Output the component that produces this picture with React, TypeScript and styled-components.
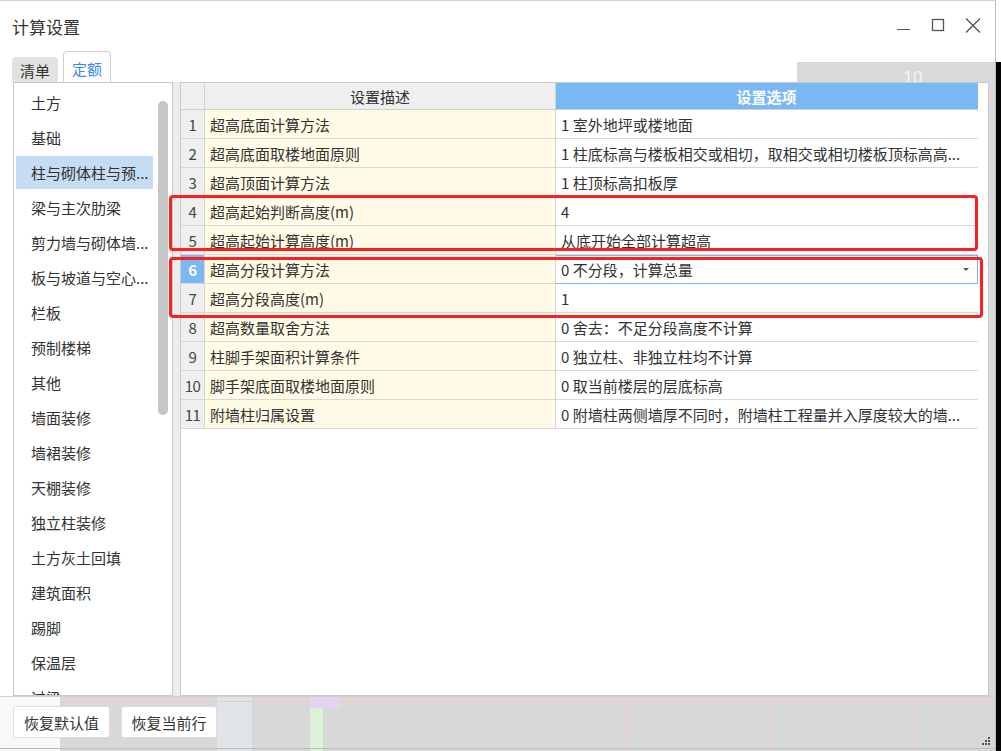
import React from "react";
import styled, { createGlobalStyle } from "styled-components";

const GlobalStyle = createGlobalStyle`
  html, body {
    margin: 0;
    padding: 0;
    background: #ffffff;
    overflow: hidden;
  }
  * {
    box-sizing: border-box;
  }
  body {
    font-family: "Noto Sans CJK SC", "Noto Sans", sans-serif;
    color: #333333;
  }
`;

const Screen = styled.div`
  display: flex;
  width: 1001px;
  height: 751px;
`;

const Window = styled.div`
  width: 996px;
  height: 751px;
  display: flex;
  flex-direction: column;
  border-top: 1px solid #d4d4d4;
  border-right: 1px solid #bdbdbd;
  background: #ffffff;
`;

const OuterEdge = styled.div`
  flex: 1;
  background: linear-gradient(to bottom, #ffffff 62px, #050505 62px);
`;

const TitleBar = styled.div`
  height: 50px;
  display: flex;
  align-items: center;
  justify-content: space-between;
  padding: 0 12px;
`;

const Title = styled.div`
  font-size: 17px;
  line-height: 20px;
  color: #333333;
  padding-top: 2px;
`;

const Controls = styled.div`
  display: flex;
  gap: 15px;
  color: #555555;
`;

const ControlButton = styled.div`
  width: 20px;
  height: 20px;
  display: flex;
`;

const TabRow = styled.div`
  position: relative;
  height: 31px;
  display: flex;
  align-items: flex-end;
  gap: 5px;
  padding-left: 12px;
  background: linear-gradient(#d9d9d9, #d9d9d9) 797px 11px / 200px 20px no-repeat,
    #ffffff;
`;

const Tab = styled.div<{ $active?: boolean }>`
  height: ${({ $active }) => ($active ? "31px" : "25px")};
  padding: 0 ${({ $active }) => ($active ? "8px" : "7px")};
  display: flex;
  align-items: center;
  font-size: 15px;
  line-height: 18px;
  color: ${({ $active }) => ($active ? "#3b8be8" : "#333333")};
  background: ${({ $active }) => ($active ? "#ffffff" : "#e2e2e2")};
  border: 1px solid ${({ $active }) => ($active ? "#cfcfcf" : "#e2e2e2")};
  border-bottom: none;
  border-radius: 4px 4px 0 0;
  padding-top: ${({ $active }) => ($active ? "4px" : "2px")};
`;

const GhostLabel = styled.div`
  position: absolute;
  left: 899px;
  top: 13px;
  width: 28px;
  height: 28px;
  border-radius: 50%;
  border: 1px solid #cfe6cf;
  color: #f4f4f4;
  font-family: "Liberation Sans", sans-serif;
  font-size: 17px;
  line-height: 26px;
  text-align: center;
`;

const Body = styled.div`
  position: relative;
  height: 614px;
  display: flex;
  padding-left: 13px;
  background: linear-gradient(to right, #ffffff 976px, #d9d9d9 976px);
`;

const ListPanel = styled.div`
  width: 160px;
  border: 1px solid #c9c9c9;
  background: #ffffff;
  display: flex;
  overflow: hidden;
`;

const ItemList = styled.div`
  width: 144px;
  padding: 3px 0 0 2px;
  display: flex;
  flex-direction: column;
  gap: 2px;
`;

const ListItem = styled.div<{ $selected?: boolean }>`
  width: 137px;
  height: 33px;
  flex: none;
  padding-left: 15px;
  display: flex;
  align-items: center;
  font-size: 15px;
  white-space: nowrap;
  color: #333333;
  background: ${({ $selected }) => ($selected ? "#c6dcf2" : "transparent")};
`;

const ScrollTrack = styled.div`
  width: 10px;
  margin-left: 0;
  padding-top: 18px;
`;

const ScrollThumb = styled.div`
  width: 10px;
  height: 314px;
  border-radius: 5px;
  background: #c6c6c6;
`;

const Splitter = styled.div`
  width: 7px;
  background: #ececec;
`;

const TablePanel = styled.div`
  width: 809px;
  border: 1px solid #c9c9c9;
  background: #ffffff;
  display: flex;
  flex-direction: column;
`;

const Row = styled.div`
  display: grid;
  grid-template-columns: 24px 351px 422px;
  height: 29px;
  width: 797px;
  border-bottom: 1px solid #d8d8d8;
`;

const HeaderRow = styled(Row)`
  height: 27px;
  border-bottom-color: #d0d0d0;
`;

const HeadCell = styled.div<{ $accent?: boolean }>`
  display: flex;
  align-items: center;
  justify-content: center;
  font-size: 15px;
  font-weight: ${({ $accent }) => ($accent ? 700 : 400)};
  color: ${({ $accent }) => ($accent ? "#ffffff" : "#333333")};
  background: ${({ $accent }) => ($accent ? "#7ab8f5" : "#efefef")};
  border-right: 1px solid ${({ $accent }) => ($accent ? "#7ab8f5" : "#d5d5d5")};
`;

const IndexCell = styled.div<{ $active?: boolean }>`
  display: flex;
  align-items: center;
  justify-content: center;
  font-size: 15px;
  font-weight: ${({ $active }) => ($active ? 700 : 400)};
  color: ${({ $active }) => ($active ? "#ffffff" : "#444444")};
  background: ${({ $active }) => ($active ? "#7ab8f5" : "#efefef")};
  border-right: 1px solid #d5d5d5;
  letter-spacing: -0.5px;
`;

const DescCell = styled.div`
  display: flex;
  align-items: center;
  padding-left: 5px;
  font-size: 15px;
  white-space: nowrap;
  color: #333333;
  background: #fffbe6;
  border-right: 1px solid #d5d5d5;
`;

const ValueCell = styled.div<{ $focused?: boolean }>`
  position: relative;
  display: flex;
  align-items: center;
  padding-left: 5px;
  font-size: 15px;
  white-space: nowrap;
  overflow: hidden;
  color: #333333;
  background: #ffffff;
  border: 1px solid ${({ $focused }) => ($focused ? "#7ab8f5" : "transparent")};
  border-left: none;
  margin-bottom: ${({ $focused }) => ($focused ? "-1px" : "0")};
`;

const DropArrow = styled.div`
  position: absolute;
  right: 8px;
  top: 12px;
  width: 0;
  height: 0;
  border-left: 3px solid transparent;
  border-right: 3px solid transparent;
  border-top: 3px solid #555555;
`;

const Highlight = styled.div<{ $left: number; $top: number; $width: number; $height: number }>`
  position: absolute;
  left: ${({ $left }) => $left}px;
  top: ${({ $top }) => $top}px;
  width: ${({ $width }) => $width}px;
  height: ${({ $height }) => $height}px;
  border: 3px solid #ff1e1e;
  border-radius: 4px;
  pointer-events: none;
`;

const Footer = styled.div`
  position: relative;
  height: 55px;
  display: flex;
  align-items: flex-start;
  gap: 11px;
  padding: 9px 0 0 13px;
  border-top: 1px solid #d0d0d0;
  background:
    linear-gradient(#bcbcbc, #bcbcbc) 0 51px / 100% 1px no-repeat,
    linear-gradient(#e6d3f2, #e6d3f2) 310px 0 / 30px 11px no-repeat,
    linear-gradient(#dcf2d8, #dcf2d8) 310px 11px / 13px 44px no-repeat,
    linear-gradient(#f2c9c9, #f2c9c9) 60px 4px / 936px 1px no-repeat,
    linear-gradient(#f2cccc, #f2cccc) 195px 0 / 1px 100% no-repeat,
    linear-gradient(#f2cccc, #f2cccc) 626px 0 / 1px 100% no-repeat,
    linear-gradient(#f2cccc, #f2cccc) 769px 0 / 1px 100% no-repeat,
    linear-gradient(#f2cccc, #f2cccc) 913px 0 / 1px 100% no-repeat,
    linear-gradient(#e0e3e7, #e0e3e7) 217px 0 / 35px 100% no-repeat,
    linear-gradient(to right, #f8f8f8 60px, #d8d8d8 60px);
`;

const FooterButton = styled.button<{ $width: number }>`
  width: ${({ $width }) => $width}px;
  height: 32px;
  border: 1px solid #dedede;
  border-radius: 3px;
  background: #ffffff;
  font-family: "Noto Sans CJK SC", "Noto Sans", sans-serif;
  font-size: 15px;
  color: #333333;
  padding: 0;
`;

const Grip = styled.svg`
  position: absolute;
  right: 5px;
  bottom: 5px;
`;

const categories = [
  "土方",
  "基础",
  "柱与砌体柱与预...",
  "梁与主次肋梁",
  "剪力墙与砌体墙...",
  "板与坡道与空心...",
  "栏板",
  "预制楼梯",
  "其他",
  "墙面装修",
  "墙裙装修",
  "天棚装修",
  "独立柱装修",
  "土方灰土回填",
  "建筑面积",
  "踢脚",
  "保温层",
  "过梁",
];

const settings = [
  ["超高底面计算方法", "1 室外地坪或楼地面"],
  ["超高底面取楼地面原则", "1 柱底标高与楼板相交或相切，取相交或相切楼板顶标高高..."],
  ["超高顶面计算方法", "1 柱顶标高扣板厚"],
  ["超高起始判断高度(m)", "4"],
  ["超高起始计算高度(m)", "从底开始全部计算超高"],
  ["超高分段计算方法", "0 不分段，计算总量"],
  ["超高分段高度(m)", "1"],
  ["超高数量取舍方法", "0 舍去：不足分段高度不计算"],
  ["柱脚手架面积计算条件", "0 独立柱、非独立柱均不计算"],
  ["脚手架底面取楼地面原则", "0 取当前楼层的层底标高"],
  ["附墙柱归属设置", "0 附墙柱两侧墙厚不同时，附墙柱工程量并入厚度较大的墙..."],
];

const ACTIVE_ROW = 6;

export default function App() {
  return (
    <>
      <GlobalStyle />
      <Screen>
        <Window>
          <TitleBar>
            <Title>计算设置</Title>
            <Controls>
              <ControlButton>
                <svg width="20" height="20" viewBox="0 0 20 20">
                  <line x1="4" y1="13.5" x2="17" y2="13.5" stroke="#555" strokeWidth="1" />
                </svg>
              </ControlButton>
              <ControlButton>
                <svg width="20" height="20" viewBox="0 0 20 20">
                  <rect x="4.5" y="3.5" width="11" height="11" fill="none" stroke="#555" strokeWidth="1.3" />
                </svg>
              </ControlButton>
              <ControlButton>
                <svg width="20" height="20" viewBox="0 0 20 20">
                  <path d="M3 2.5 L17 16.5 M17 2.5 L3 16.5" stroke="#555" strokeWidth="1.3" />
                </svg>
              </ControlButton>
            </Controls>
          </TitleBar>

          <TabRow>
            <Tab>清单</Tab>
            <Tab $active>定额</Tab>
            <GhostLabel>10</GhostLabel>
          </TabRow>

          <Body>
            <ListPanel>
              <ItemList>
                {categories.map((name, i) => (
                  <ListItem key={name} $selected={i === 2}>
                    {name}
                  </ListItem>
                ))}
              </ItemList>
              <ScrollTrack>
                <ScrollThumb />
              </ScrollTrack>
            </ListPanel>
            <Splitter />
            <TablePanel>
              <HeaderRow>
                <HeadCell />
                <HeadCell>设置描述</HeadCell>
                <HeadCell $accent>设置选项</HeadCell>
              </HeaderRow>
              {settings.map(([desc, value], i) => {
                const n = i + 1;
                const active = n === ACTIVE_ROW;
                return (
                  <Row key={desc}>
                    <IndexCell $active={active}>{n}</IndexCell>
                    <DescCell>{desc}</DescCell>
                    <ValueCell $focused={active}>
                      {value}
                      {active && <DropArrow />}
                    </ValueCell>
                  </Row>
                );
              })}
            </TablePanel>
            <Highlight $left={169} $top={113} $width={809} $height={56} />
            <Highlight $left={169} $top={175} $width={814} $height={61} />
          </Body>

          <Footer>
            <FooterButton $width={97}>恢复默认值</FooterButton>
            <FooterButton $width={96}>恢复当前行</FooterButton>
            <Grip width="9" height="9" viewBox="0 0 9 9">
              <rect x="7" y="0" width="2" height="2" fill="#555" />
              <rect x="4" y="3" width="2" height="2" fill="#555" />
              <rect x="7" y="3" width="2" height="2" fill="#555" />
              <rect x="1" y="6" width="2" height="2" fill="#555" />
              <rect x="4" y="6" width="2" height="2" fill="#555" />
              <rect x="7" y="6" width="2" height="2" fill="#555" />
            </Grip>
          </Footer>
        </Window>
        <OuterEdge />
      </Screen>
    </>
  );
}
